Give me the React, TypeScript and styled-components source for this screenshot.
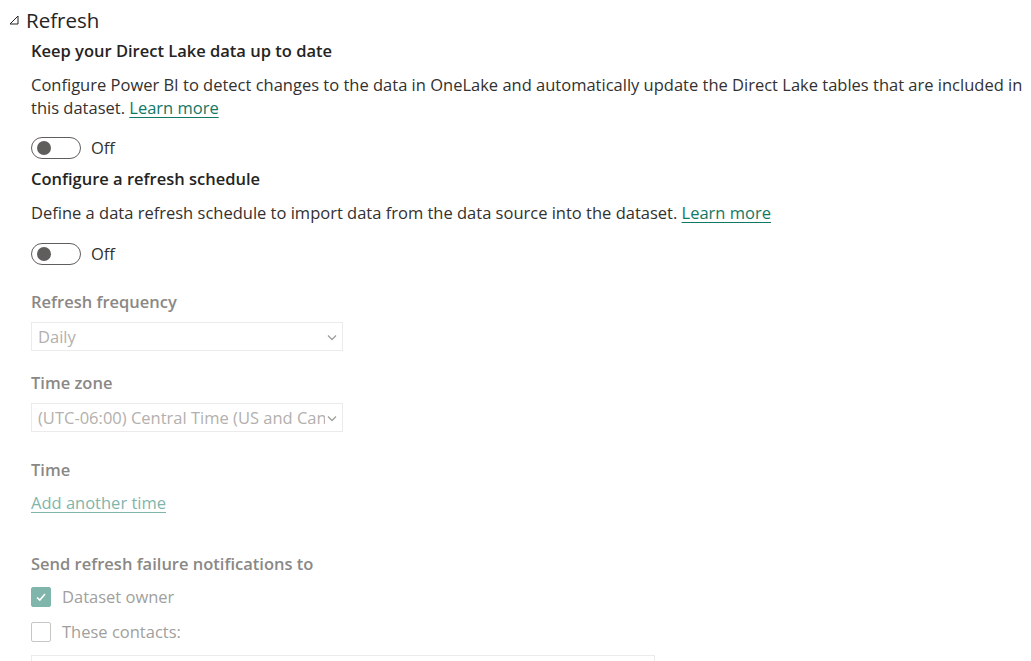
import React from "react";
import styled, { createGlobalStyle } from "styled-components";

const Global = createGlobalStyle`
  html, body { margin: 0; padding: 0; background: #ffffff; }
  body { font-family: "Open Sans", "Noto Sans", "Liberation Sans", sans-serif; color: #252423; }
`;

const Page = styled.div`
  width: 1031px;
  height: 661px;
  overflow: hidden;
  padding: 6px 0 0 8px;
  box-sizing: border-box;
`;

const SectionHeader = styled.div`
  display: flex;
  align-items: center;
  gap: 6px;
  font-size: 20.5px;
  line-height: 28px;
  color: #252423;
`;

const Body = styled.div`
  display: flex;
  flex-direction: column;
  padding-left: 23px;
  width: 1000px;
`;

const Title = styled.div<{ $muted?: boolean; $mt?: number }>`
  font-size: 16.5px;
  font-weight: 600;
  line-height: 22px;
  color: ${(p) => (p.$muted ? "#8a8886" : "#252423")};
  margin-top: ${(p) => p.$mt ?? 0}px;
`;

const Para = styled.p`
  margin: 11px 0 0 0;
  font-size: 16.5px;
  line-height: 23px;
  color: #323130;
`;

const Link = styled.a<{ $muted?: boolean }>`
  color: ${(p) => (p.$muted ? "#7fb5ab" : "#117865")};
  text-decoration: underline;
  text-underline-offset: 3px;
  cursor: pointer;
`;

const ToggleRow = styled.div<{ $mt: number }>`
  display: flex;
  align-items: center;
  gap: 10px;
  margin-top: ${(p) => p.$mt}px;
  font-size: 16.5px;
  color: #323130;
`;

const Track = styled.div`
  width: 50px;
  height: 22px;
  box-sizing: border-box;
  border: 1px solid #605e5c;
  border-radius: 11px;
  display: flex;
  align-items: center;
  padding-left: 5px;
`;

const Knob = styled.div`
  width: 14px;
  height: 14px;
  border-radius: 50%;
  background: #605e5c;
`;

const Select = styled.div`
  width: 312px;
  height: 29px;
  box-sizing: border-box;
  border: 1px solid #edebe9;
  margin-top: 9px;
  display: flex;
  align-items: center;
  justify-content: space-between;
  padding: 0 4px 0 6px;
  font-size: 16.5px;
  color: #b3b0ad;
  white-space: nowrap;
  overflow: hidden;
`;

const SelectText = styled.span`
  overflow: hidden;
  flex: 1;
  text-overflow: clip;
`;

const Chevron = styled.svg`
  flex: none;
  margin-left: 1px;
`;

const CheckRow = styled.div<{ $mt: number }>`
  display: flex;
  align-items: center;
  gap: 11px;
  margin-top: ${(p) => p.$mt}px;
  font-size: 16.5px;
  color: #a19f9d;
`;

const Box = styled.div<{ $checked?: boolean }>`
  width: 20px;
  height: 20px;
  box-sizing: border-box;
  border-radius: 2px;
  border: 1px solid ${(p) => (p.$checked ? "#7fb5ab" : "#c8c6c4")};
  background: ${(p) => (p.$checked ? "#7fb5ab" : "#fff")};
  display: flex;
  align-items: center;
  justify-content: center;
`;

const Input = styled.div`
  width: 624px;
  height: 30px;
  margin-top: 12px;
  border: 1px solid #edebe9;
  box-sizing: border-box;
`;

const LinkLine = styled.div`
  margin-top: 11px;
  font-size: 16.5px;
  line-height: 22px;
`;

const Chev = () => (
  <Chevron width="12" height="12" viewBox="0 0 12 12">
    <path d="M2 4.5 L6 8.5 L10 4.5" fill="none" stroke="#a19f9d" strokeWidth="1.3" />
  </Chevron>
);

export default function App() {
  return (
    <Page>
      <Global />
      <SectionHeader>
        <svg width="12" height="12" viewBox="0 0 12 12">
          <path d="M10 2 L10 10 L2 10 Z" fill="none" stroke="#252423" strokeWidth="1" />
        </svg>
        Refresh
      </SectionHeader>
      <Body>
        <Title $mt={6}>Keep your Direct Lake data up to date</Title>
        <Para>
          Configure Power BI to detect changes to the data in OneLake and automatically update the Direct Lake
          tables that are included in this dataset. <Link>Learn more</Link>
        </Para>
        <ToggleRow $mt={17}>
          <Track>
            <Knob />
          </Track>
          Off
        </ToggleRow>
        <Title $mt={9}>Configure a refresh schedule</Title>
        <Para>
          Define a data refresh schedule to import data from the data source into the dataset. <Link>Learn more</Link>
        </Para>
        <ToggleRow $mt={18}>
          <Track>
            <Knob />
          </Track>
          Off
        </ToggleRow>
        <Title $muted $mt={26}>Refresh frequency</Title>
        <Select>
          <SelectText>Daily</SelectText>
          <Chev />
        </Select>
        <Title $muted $mt={21}>Time zone</Title>
        <Select>
          <SelectText>(UTC-06:00) Central Time (US and Canada)</SelectText>
          <Chev />
        </Select>
        <Title $muted $mt={27}>Time</Title>
        <LinkLine>
          <Link $muted>Add another time</Link>
        </LinkLine>
        <Title $muted $mt={39}>Send refresh failure notifications to</Title>
        <CheckRow $mt={10}>
          <Box $checked>
            <svg width="14" height="14" viewBox="0 0 14 14">
              <path d="M3 7.5 L5.8 10 L11 4" fill="none" stroke="#fff" strokeWidth="1.6" />
            </svg>
          </Box>
          Dataset owner
        </CheckRow>
        <CheckRow $mt={12}>
          <Box />
          These contacts:
        </CheckRow>
        <Input />
      </Body>
    </Page>
  );
}
